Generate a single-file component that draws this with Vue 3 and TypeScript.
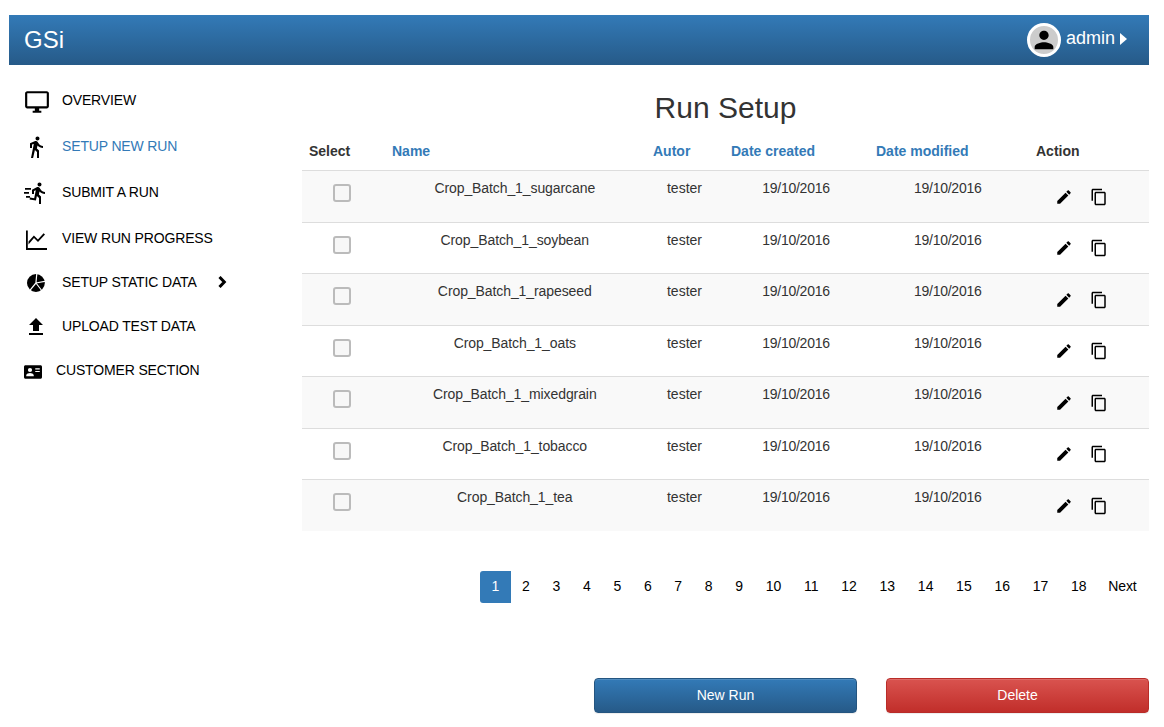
<template>
  <div class="page">
    <header class="topbar">
      <span class="brand">GSi</span>
      <div class="user">
        <span class="avatar">
          <svg viewBox="0 0 24 24" width="28" height="28"><path d="M12 12c2.21 0 4-1.79 4-4s-1.79-4-4-4-4 1.79-4 4 1.79 4 4 4zm0 2c-2.67 0-8 1.34-8 4v2h16v-2c0-2.66-5.33-4-8-4z" /></svg>
        </span>
        <span class="user-name">admin</span>
        <svg class="caret" viewBox="0 0 7 12" width="7" height="12"><path d="M0 0l7 6-7 6z" /></svg>
      </div>
    </header>

    <div class="body">
      <nav class="sidebar">
        <a v-for="item in navItems" :key="item.label" class="nav-item" :class="[item.cls, { active: item.active }]">
          <span class="nav-icon">
            <svg viewBox="0 0 24 24" :width="item.size" :height="item.size" v-html="item.icon"></svg>
          </span>
          <span class="nav-label">{{ item.label }}</span>
          <svg v-if="item.more" class="chevron" viewBox="0 0 9 12" width="9" height="12"><path d="M1.5 1l4.800 5-4.800 5" /></svg>
        </a>
      </nav>

      <main class="main">
        <h1 class="title">Run Setup</h1>
        <table class="runs">
          <colgroup>
            <col class="c-select" />
            <col class="c-name" />
            <col class="c-autor" />
            <col class="c-created" />
            <col class="c-modified" />
            <col class="c-action" />
          </colgroup>
          <thead>
            <tr>
              <th>Select</th>
              <th class="sortable">Name</th>
              <th class="sortable">Autor</th>
              <th class="sortable">Date created</th>
              <th class="sortable">Date modified</th>
              <th>Action</th>
            </tr>
          </thead>
          <tbody>
            <tr v-for="run in runs" :key="run">
              <td class="check-cell"><input type="checkbox" class="check" /></td>
              <td class="name-cell">{{ run }}</td>
              <td class="autor-cell">tester</td>
              <td class="date-cell">19/10/2016</td>
              <td class="date-cell modified">19/10/2016</td>
              <td class="action-cell">
                <svg viewBox="0 0 24 24" width="18" height="18"><path d="M3 17.25V21h3.75L17.81 9.94l-3.75-3.75L3 17.25zM20.71 7.04c.39-.39.39-1.02 0-1.41l-2.34-2.34c-.39-.39-1.02-.39-1.41 0l-1.83 1.83 3.75 3.75 1.83-1.83z" /></svg>
                <svg viewBox="0 0 24 24" width="18" height="18"><path d="M16 1H4c-1.1 0-2 .9-2 2v14h2V3h12V1zm3 4H8c-1.1 0-2 .9-2 2v14c0 1.1.9 2 2 2h11c1.1 0 2-.9 2-2V7c0-1.1-.9-2-2-2zm0 16H8V7h11v14z" /></svg>
              </td>
            </tr>
          </tbody>
        </table>

        <div class="pagination">
          <a v-for="p in pages" :key="p" class="page-link" :class="{ current: p === 1 }">{{ p }}</a>
          <a class="page-link next">Next</a>
        </div>

        <div class="buttons">
          <button class="btn btn-primary">New Run</button>
          <button class="btn btn-danger">Delete</button>
        </div>
      </main>
    </div>
  </div>
</template>

<script setup lang="ts">
interface NavItem {
  label: string
  icon: string
  size: number
  cls?: string
  active?: boolean
  more?: boolean
}

const navItems: NavItem[] = [
  {
    label: 'OVERVIEW',
    size: 26,
    cls: 'drop',
    icon: '<path d="M21 2H3c-1.1 0-2 .9-2 2v12c0 1.100.9 2 2 2h7v2H8v2h8v-2h-2v-2h7c1.100 0 2-.9 2-2V4c0-1.100-.9-2-2-2zm0 14H3V4h18v12z"/>'
  },
  {
    label: 'SETUP NEW RUN',
    size: 24,
    active: true,
    icon: '<path d="M13.500 5.500c1.100 0 2-.9 2-2s-.9-2-2-2-2 .9-2 2 .9 2 2 2zM9.800 8.900L7 23h2.100l1.800-8 2.100 2v6h2v-7.500l-2.100-2 .6-3C14.800 12 16.800 13 19 13v-2c-1.900 0-3.500-1-4.300-2.400l-1-1.600c-.4-.6-1-1-1.700-1-.3 0-.5.1-.8.1L6 8.300V13h2V9.600l1.800-.7"/>'
  },
  {
    label: 'SUBMIT A RUN',
    size: 24,
    icon: '<path d="M15.500 5.500c1.100 0 2-.9 2-2s-.9-2-2-2-2 .9-2 2 .9 2 2 2zM11.900 19.400l1-4.400 2.100 2v6h2v-7.500l-2.100-2 .6-3c1.300 1.500 3.300 2.500 5.500 2.500v-2c-1.900 0-3.500-1-4.300-2.400l-1-1.600c-.4-.6-1-1-1.700-1-.3 0-.5.1-.8.100L8 8.700v4.300h2V9.900l1.800-.7-1.600 8.100-4.200-.9-.4 2 6.300 1zM1 7h6v1.800H1zM0 11h5v1.800H0zM2 15h4v1.800H2z"/>'
  },
  {
    label: 'VIEW RUN PROGRESS',
    size: 24,
    cls: 'tight drop',
    icon: '<path d="M4.500 16.500l5.500-6.500 4 4L21 6.500l-1.400-1.300-5.700 6.300-4-4L4.500 13.500zM2 2.500h1.800V20H23v2H2z"/>'
  },
  {
    label: 'SETUP STATIC DATA',
    size: 22,
    more: true,
    cls: 'tight',
    icon: '<circle cx="13" cy="12" r="9.700"/><path d="M13 12L14 1.500M13 12L24 10M13 12L20 21M13 12L6 20.500" stroke="#fff" stroke-width="1.300" fill="none"/>'
  },
  {
    label: 'UPLOAD TEST DATA',
    size: 24,
    cls: 'tight',
    icon: '<path d="M9 16h6v-6h4l-7-7-7 7h4zm-4 2h14v2H5z"/>'
  },
  {
    label: 'CUSTOMER SECTION',
    size: 18,
    cls: 'tight customer drop',
    icon: '<path fill-rule="evenodd" d="M2 3h20c1.100 0 2 .9 2 2v14c0 1.100-.9 2-2 2H2c-1.100 0-2-.9-2-2V5c0-1.100.9-2 2-2zm6 3.500a2.800 2.800 0 1 0 0 5.600 2.800 2.800 0 0 0 0-5.600zM3 17.500h10v-1.300c0-1.900-3.300-2.900-5-2.900s-5 1-5 2.900zM15 7v1.500h6V7zm0 3.500V12h6v-1.500z"/>'
  }
]

const runs: string[] = [
  'Crop_Batch_1_sugarcane',
  'Crop_Batch_1_soybean',
  'Crop_Batch_1_rapeseed',
  'Crop_Batch_1_oats',
  'Crop_Batch_1_mixedgrain',
  'Crop_Batch_1_tobacco',
  'Crop_Batch_1_tea'
]

const pages: number[] = Array.from({ length: 18 }, (_, i) => i + 1)
</script>

<style>
html,
body {
  margin: 0;
  background: #fff;
}
</style>

<style scoped>
.page {
  width: 1164px;
  height: 727px;
  box-sizing: border-box;
  padding: 15px 15px 0 9px;
  font-family: "Liberation Sans", Arial, sans-serif;
  font-size: 14px;
  color: #333;
  overflow: hidden;
}

.topbar {
  height: 50px;
  display: flex;
  align-items: center;
  justify-content: space-between;
  padding: 0 22px 0 15px;
  background: linear-gradient(to bottom, #337ab7 0%, #265a88 100%);
  color: #fff;
}

.brand {
  font-size: 24px;
}

.user {
  display: flex;
  align-items: center;
  margin-top: -4px;
}

.avatar {
  width: 34px;
  height: 34px;
  box-sizing: border-box;
  border: 3px solid #fff;
  border-radius: 50%;
  background: #ccc;
  display: flex;
  align-items: center;
  justify-content: center;
  margin-top: 3px;
}

.user-name {
  font-size: 18px;
  margin-left: 5px;
}

.caret {
  fill: #fff;
  margin-left: 5px;
  margin-top: 1px;
}

.body {
  display: flex;
}

.sidebar {
  width: 293px;
  flex-shrink: 0;
  padding-top: 23px;
}

.nav-item {
  display: flex;
  align-items: center;
  height: 24px;
  margin-bottom: 22px;
  color: #000;
}

.nav-item.tight {
  margin-bottom: 20px;
}

.nav-item.active {
  color: #337ab7;
}

.nav-label {
  letter-spacing: -0.15px;
}

.nav-icon {
  width: 38px;
  margin-left: 15px;
  margin-top: 2px;
  flex-shrink: 0;
  display: flex;
}

.nav-item.drop .nav-icon {
  margin-top: 4px;
}

.nav-icon svg {
  fill: #000;
}

.nav-item.customer .nav-icon {
  width: 32px;
}

.chevron {
  margin-left: 21px;
  fill: none;
  stroke: #000;
  stroke-width: 3;
}

.main {
  flex: 1;
  min-width: 0;
}

.title {
  margin: 26px 0 0;
  text-align: center;
  font-size: 30px;
  font-weight: 400;
  line-height: 33px;
}

.runs {
  width: 847px;
  margin-top: 10px;
  border-collapse: collapse;
  table-layout: fixed;
}

.c-select {
  width: 83px;
}

.c-name {
  width: 261px;
}

.c-autor {
  width: 78px;
}

.c-created {
  width: 145px;
}

.c-modified {
  width: 160px;
}

.c-action {
  width: 120px;
}

.runs th {
  height: 36px;
  padding: 0 7px 2px;
  box-sizing: border-box;
  text-align: left;
  font-weight: 700;
  vertical-align: middle;
}

.runs th.sortable {
  color: #337ab7;
}

.runs td {
  height: 52px;
  box-sizing: border-box;
  padding: 8px 7px 0;
  text-align: center;
  vertical-align: top;
  border-top: 1px solid #ddd;
  line-height: 18px;
}

.runs tbody tr:nth-child(even) td {
  height: 51px;
}

.runs td.name-cell {
  padding-right: 8.5px;
  letter-spacing: -0.09px;
}

.runs td.autor-cell {
  padding-right: 8px;
}

.runs td.date-cell {
  padding-right: 8px;
  letter-spacing: -0.27px;
}

.runs td.date-cell.modified {
  padding-right: 9.5px;
}

.runs tbody tr:nth-child(odd) {
  background: #f9f9f9;
}

.runs td.check-cell {
  padding-top: 13px;
  padding-right: 39px;
  padding-left: 0;
  text-align: right;
  line-height: 0;
}

.check {
  appearance: none;
  width: 18px;
  height: 18px;
  margin: 0 -5px 0 0;
  box-sizing: border-box;
  border: 2px solid #bbb;
  border-radius: 3px;
  background: #f7f7f7;
}

.runs td.action-cell {
  padding: 17px 0 0 26px;
  text-align: left;
  line-height: 0;
}

.runs tbody tr:nth-child(even) td.action-cell {
  padding-top: 16px;
}

.action-cell svg {
  fill: #000;
  margin-right: 17px;
}

.pagination {
  display: flex;
  justify-content: flex-end;
  margin-top: 40px;
}

.page-link {
  height: 32px;
  line-height: 30px;
  padding: 0 11.35px;
  color: #000;
}

.page-link.next {
  padding: 0 12.35px 0 10.45px;
  letter-spacing: -0.1px;
}

.page-link.current {
  background: #337ab7;
  color: #fff;
  border-radius: 3px 0 0 3px;
}

.buttons {
  display: flex;
  justify-content: flex-end;
  gap: 29px;
  margin-top: 75px;
}

.btn {
  width: 263px;
  height: 35px;
  border-radius: 4px;
  color: #fff;
  font-family: inherit;
  font-size: 14px;
  padding: 0 0 2px;
  box-shadow: inset 0 1px 0 rgba(255, 255, 255, 0.15), 0 1px 1px rgba(0, 0, 0, 0.075);
}

.btn-primary {
  background: linear-gradient(to bottom, #337ab7 0%, #265a88 100%);
  border: 1px solid #245580;
}

.btn-danger {
  background: linear-gradient(to bottom, #d9534f 0%, #c12e2a 100%);
  border: 1px solid #b92c28;
}
</style>
